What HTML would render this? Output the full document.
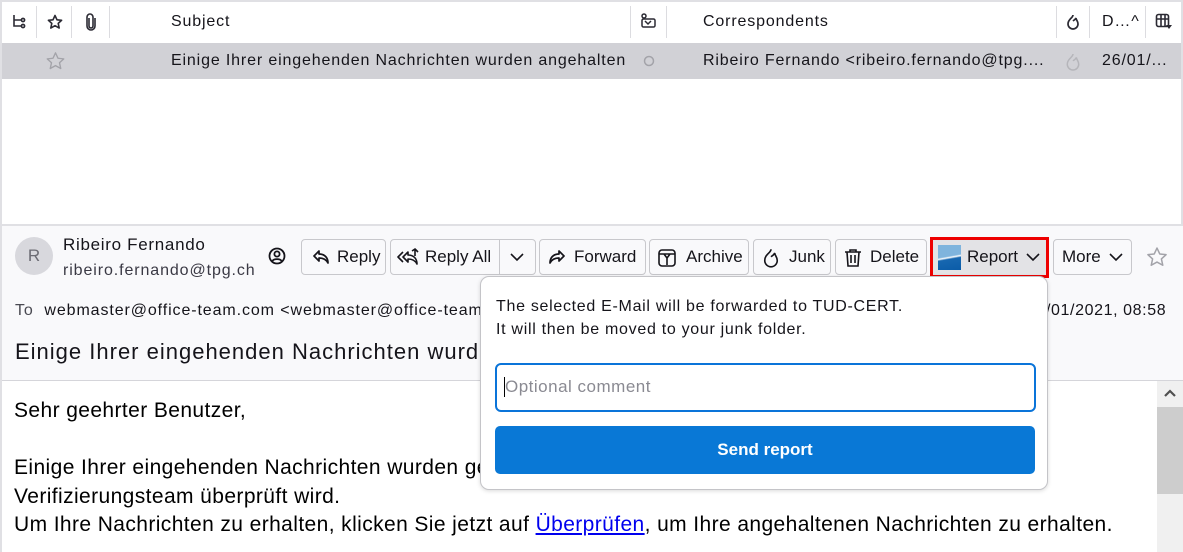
<!DOCTYPE html>
<html><head><meta charset="utf-8">
<style>
*{margin:0;padding:0;box-sizing:border-box}
body{width:1183px;height:552px;overflow:hidden;background:#fff;font-family:"Liberation Sans",sans-serif;color:#15141a;position:relative}
.a{position:absolute;white-space:nowrap}
.t16{font-size:16px;letter-spacing:.85px}
.sep{position:absolute;top:6px;width:1px;height:32px;background:#dcdce0}
.btn{position:absolute;top:239px;height:36px;border:1px solid #c8c8cc;border-radius:4px;background:#f9f9fb;font-size:17px;line-height:34px;padding-left:8px;color:#15141a}
.btn svg{position:absolute;top:8px}
</style></head><body>
<div class="a" style="left:0;top:0;width:1183px;height:2px;background:#e0e0e4"></div>
<div class="a" style="left:0;top:0;width:2px;height:552px;background:#e0e0e4"></div>
<div class="a" style="left:1181px;top:0;width:2px;height:230px;background:#e0e0e4"></div>
<div class="sep" style="left:36px"></div><div class="sep" style="left:71px"></div><div class="sep" style="left:109px"></div>
<div class="sep" style="left:630px"></div><div class="sep" style="left:666px"></div><div class="sep" style="left:1056px"></div><div class="sep" style="left:1089px"></div><div class="sep" style="left:1145px"></div>
<svg class="a" style="left:12px;top:14px" width="14" height="16" viewBox="0 0 14 16" fill="none" stroke="#2b2a33" stroke-width="1.6"><path d="M2 1v11h7M2 6h7"/><circle cx="11" cy="6" r="1.6"/><circle cx="11" cy="12" r="1.6"/></svg>
<svg class="a" style="left:47px;top:14px" width="16" height="16" viewBox="0 0 16 16" fill="none" stroke="#2b2a33" stroke-width="1.6" stroke-linejoin="round"><path d="M8 1.5l2 4.3 4.6.5-3.4 3.1 1 4.6L8 11.7 3.8 14l1-4.6L1.4 6.3l4.6-.5z"/></svg>
<svg class="a" style="left:85px;top:13px" width="12" height="18" viewBox="0 0 12 18" fill="none" stroke="#2b2a33" stroke-width="1.6"><path d="M4 5v8a2 2 0 0 0 4 0V4a3 3 0 0 0-6 0v9a4 4 0 0 0 8 0V5"/></svg>
<div class="a t16" style="left:171px;top:13px;color:#15141a">Subject</div>
<svg class="a" style="left:640px;top:13px" width="17" height="15" viewBox="0 0 17 15" fill="none" stroke="#2b2a33" stroke-width="1.5"><circle cx="4" cy="3" r="2"/><rect x="2" y="6" width="13" height="8" rx="1.5"/><path d="M5 8l3 3 3-3"/></svg>
<div class="a t16" style="left:703px;top:13px">Correspondents</div>
<svg class="a" style="left:1066px;top:14px" width="14" height="16" viewBox="0 0 14 16" fill="none" stroke="#2b2a33" stroke-width="1.7"><path d="M7 1c0 3-5 4-5 9a5 5 0 0 0 10 0c0-3-2-4-2-6-1 2-2 2-3 3"/></svg>
<div class="a t16" style="left:1102px;top:13px">D…^</div>
<svg class="a" style="left:1155px;top:13px" width="18" height="17" viewBox="0 0 18 17" fill="none" stroke="#2b2a33" stroke-width="1.6"><rect x="1.5" y="1.5" width="12" height="12" rx="2"/><path d="M1.5 6h12M6 1.5v12M10 1.5v12"/><path d="M11 12h6l-3 4z" fill="#2b2a33" stroke="none"/></svg>
<div class="a" style="left:2px;top:43px;width:1179px;height:36px;background:#d1d1d6"></div>
<svg class="a" style="left:45px;top:51px" width="21" height="20" viewBox="0 0 16 16" fill="none" stroke="#a3a3a9" stroke-width="1.1" stroke-linejoin="round"><path d="M8 1.5l2 4.3 4.6.5-3.4 3.1 1 4.6L8 11.7 3.8 14l1-4.6L1.4 6.3l4.6-.5z"/></svg>
<div class="a t16" style="left:171px;top:52px">Einige Ihrer eingehenden Nachrichten wurden angehalten</div>
<svg class="a" style="left:643px;top:55px" width="12" height="12"><circle cx="6" cy="6" r="4.5" fill="none" stroke="#a3a3a9" stroke-width="1.5"/></svg>
<div class="a t16" style="left:703px;top:52px">Ribeiro Fernando &lt;ribeiro.fernando@tpg....</div>
<svg class="a" style="left:1065px;top:52px" width="16" height="20" viewBox="0 0 14 16" fill="none" stroke="#b5b5ba" stroke-width="1.3"><path d="M7 1c0 3-5 4-5 9a5 5 0 0 0 10 0c0-3-2-4-2-6-1 2-2 2-3 3"/></svg>
<div class="a t16" style="left:1102px;top:52px">26/01/...</div>
<div class="a" style="left:2px;top:224px;width:1181px;height:2px;background:#e0e0e4"></div>
<div class="a" style="left:2px;top:226px;width:1181px;height:154px;background:#f9f9fb"></div>
<div class="a" style="left:2px;top:380px;width:1181px;height:1px;background:#d5d5da"></div>
<div class="a" style="left:15px;top:237px;width:38px;height:38px;border-radius:50%;background:#d8d8dd;color:#6b6b73;font-size:17px;line-height:38px;text-align:center">R</div>
<div class="a" style="left:63px;top:235px;font-size:17px;letter-spacing:.7px">Ribeiro Fernando</div>
<div class="a" style="left:63px;top:262px;font-size:16px;letter-spacing:.9px;color:#3a3944">ribeiro.fernando@tpg.ch</div>
<svg class="a" style="left:268px;top:247px" width="18" height="18" viewBox="0 0 18 18" fill="none" stroke="#15141a" stroke-width="1.8"><circle cx="9" cy="9" r="7.5"/><circle cx="9" cy="7" r="2.6"/><path d="M4.5 14c1-2.5 8-2.5 9 0"/></svg>
<div class="btn" style="left:301px;width:85px"><svg style="left:10px" width="18" height="18" viewBox="0 0 18 18" fill="none" stroke="#15141a" stroke-width="1.7" stroke-linejoin="round"><path d="M7 3L2 8l5 5V10c4 0 7 1 9 5 0-5-3-9-9-9z"/></svg><span style="padding-left:27px">Reply</span></div>
<div class="btn" style="left:390px;width:146px"><svg style="left:6px" width="24" height="20" viewBox="0 0 24 20" fill="none" stroke="#15141a" stroke-width="1.6" stroke-linejoin="round"><path d="M6 4L1 9l5 5"/><path d="M11 4L6 9l5 5v-3c4 0 7 1 9 5 0-5-3-9-9-9z"/><path d="M15 3l3-2 3 3M18 1v7"/></svg><span style="padding-left:26px">Reply All</span><div class="a" style="left:108px;top:0;width:1px;height:34px;background:#c8c8cc"></div><svg style="left:118px;top:12px" width="16" height="10" viewBox="0 0 16 10" fill="none" stroke="#15141a" stroke-width="1.6"><path d="M2 2l6 6 6-6"/></svg></div>
<div class="btn" style="left:539px;width:107px"><svg style="left:8px" width="18" height="18" viewBox="0 0 18 18" fill="none" stroke="#15141a" stroke-width="1.7" stroke-linejoin="round"><path d="M11 3l5 5-5 5V10c-4 0-7 1-9 5 0-5 3-9 9-9z"/></svg><span style="padding-left:26px">Forward</span></div>
<div class="btn" style="left:649px;width:100px"><svg style="left:7px" width="20" height="20" viewBox="0 0 20 20" fill="none" stroke="#15141a" stroke-width="1.6"><rect x="2" y="2" width="16" height="16" rx="3"/><path d="M2 6h16M7 6l3 4 3-4M10 10v7"/></svg><span style="padding-left:28px">Archive</span></div>
<div class="btn" style="left:753px;width:78px"><svg style="left:8px" width="18" height="20" viewBox="0 0 14 16" fill="none" stroke="#15141a" stroke-width="1.3"><path d="M7 1c0 3-5 4-5 9a5 5 0 0 0 10 0c0-3-2-4-2-6-1 2-2 2-3 3"/></svg><span style="padding-left:27px">Junk</span></div>
<div class="btn" style="left:835px;width:92px"><svg style="left:8px" width="18" height="20" viewBox="0 0 18 20" fill="none" stroke="#15141a" stroke-width="1.6"><path d="M1 4h16M6 4V2h6v2M3 4l1 14h10l1-14M7 7v8M11 7v8"/></svg><span style="padding-left:26px">Delete</span></div>
<div class="a" style="left:930px;top:237px;width:119px;height:41px;border:3px solid #ee0000;background:#e3e3e6"></div>
<div class="a" style="left:938px;top:245px;width:23px;height:25px;background:linear-gradient(170deg,#7fb4dd 0%,#7fb4dd 45%,#ffffff 50%,#1767b0 56%,#0b5ca8 100%)"></div>
<div class="a" style="left:967px;top:247px;font-size:17px">Report</div>
<svg class="a" style="left:1025px;top:252px" width="16" height="10" viewBox="0 0 16 10" fill="none" stroke="#15141a" stroke-width="1.6"><path d="M2 2l6 6 6-6"/></svg>
<div class="btn" style="left:1053px;width:79px"><span>More</span><svg style="left:54px;top:12px" width="16" height="10" viewBox="0 0 16 10" fill="none" stroke="#15141a" stroke-width="1.6"><path d="M2 2l6 6 6-6"/></svg></div>
<svg class="a" style="left:1146px;top:246px" width="22" height="22" viewBox="0 0 16 16" fill="none" stroke="#a3a3a9" stroke-width="1.1" stroke-linejoin="round"><path d="M8 1.5l2 4.3 4.6.5-3.4 3.1 1 4.6L8 11.7 3.8 14l1-4.6L1.4 6.3l4.6-.5z"/></svg>
<div class="a" style="left:15px;top:302px;font-size:16px;letter-spacing:.9px;width:465px;overflow:hidden"><span style="color:#4a4a52">To</span>&nbsp; webmaster@office-team.com &lt;webmaster@office-team.com&gt;</div>
<div class="a" style="left:1040px;top:302px;font-size:16px;letter-spacing:.6px;background:#f9f9fb;padding-left:6px;width:135px">/01/2021, 08:58</div>
<div class="a" style="left:15px;top:339px;font-size:22px;letter-spacing:1px;width:465px;overflow:hidden">Einige Ihrer eingehenden Nachrichten wurden angehalten</div>
<div class="a" style="left:14px;top:397px;font-size:21px;letter-spacing:.4px;line-height:28.5px;color:#000">Sehr geehrter Benutzer,<br><br>Einige Ihrer eingehenden Nachrichten wurden gesperrt und werden zurückgehalten, bis sie von unserem<br>Verifizierungsteam überprüft wird.<br>Um Ihre Nachrichten zu erhalten, klicken Sie jetzt auf <span style="color:#0000ee;text-decoration:underline">Überprüfen</span>, um Ihre angehaltenen Nachrichten zu erhalten.</div>
<div class="a" style="left:1157px;top:381px;width:26px;height:171px;background:#f0f0f0"></div>
<div class="a" style="left:1157px;top:407px;width:26px;height:87px;background:#cdcdcd"></div>
<svg class="a" style="left:1163px;top:388px" width="14" height="10" viewBox="0 0 14 10" fill="none" stroke="#505050" stroke-width="2.2"><path d="M2 8l5-5 5 5"/></svg>
<div class="a" style="left:480px;top:276px;width:568px;height:214px;background:#fff;border:1px solid #c4c4c8;border-radius:9px;box-shadow:0 1px 4px rgba(0,0,0,.15)"></div>
<div class="a" style="left:496px;top:295px;font-size:16px;letter-spacing:.7px;line-height:23px">The selected E-Mail will be forwarded to TUD-CERT.<br>It will then be moved to your junk folder.</div>
<div class="a" style="left:495px;top:363px;width:541px;height:49px;border:2px solid #0a74d9;border-radius:6px;background:#fff"></div>
<div class="a" style="left:504px;top:377px;width:1px;height:20px;background:#000"></div>
<div class="a" style="left:505px;top:377px;font-size:17px;letter-spacing:.5px;color:#8a8a92">Optional comment</div>
<div class="a" style="left:495px;top:426px;width:540px;height:48px;background:#0978d6;border-radius:5px;color:#fff;font-weight:bold;font-size:17px;line-height:48px;text-align:center">Send report</div>
</body></html>
